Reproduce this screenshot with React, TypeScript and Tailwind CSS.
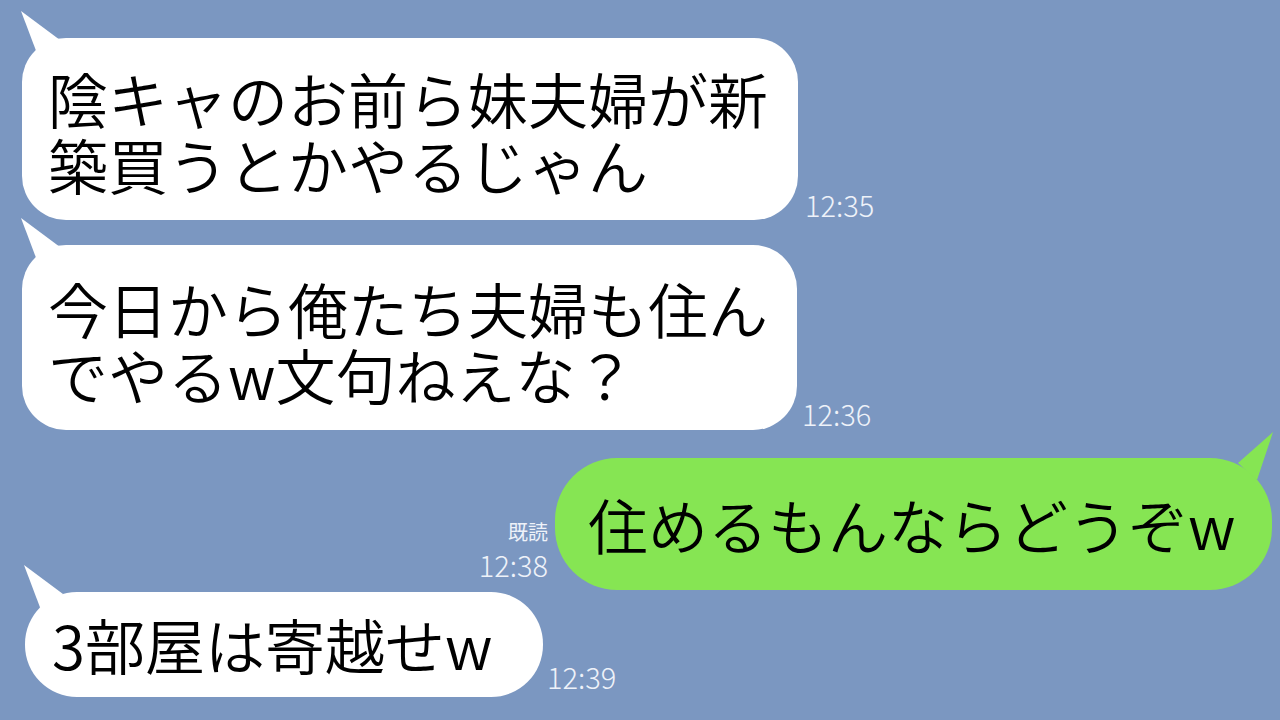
import React from "react"

type Msg = {
    lines: string[]
    time: string
}

const Tail = ({ fill }: { fill: string }) => (
    <svg className="absolute left-[-2px] top-[-28px]" width="50" height="50" viewBox="0 0 50 50">
        <polygon points="1,1 18,46 40,30" fill={fill} />
    </svg>
)

const Time = ({ children, className = "" }: { children: React.ReactNode, className?: string }) => (
    <div className={`text-[29px] leading-none font-light text-[#eef2f9] whitespace-nowrap ${className}`}>{children}</div>
)

function LeftBubble({ msg, className, bubbleClass, timeClass }: { msg: Msg, className: string, bubbleClass: string, timeClass: string }) {
    return (
        <div className={`flex items-end ${className}`}>
            <div className={`relative bg-white ${bubbleClass}`}>
                <Tail fill="#ffffff" />
                <p className="relative text-[60px] leading-[66px] font-[350] text-black whitespace-nowrap">
                    {msg.lines.map((l, k) => (
                        <React.Fragment key={k}>
                            {k > 0 && <br />}
                            {l}
                        </React.Fragment>
                    ))}
                </p>
            </div>
            <Time className={timeClass}>{msg.time}</Time>
        </div>
    )
}

export default function App() {
    return (
        <div className="w-[1280px] h-[720px] overflow-hidden bg-[#7b97c1] font-['Noto_Sans_CJK_JP',sans-serif]">
            <div className="flex flex-col pt-[38px]">
                <LeftBubble
                    msg={{ lines: ["陰キャのお前ら妹夫婦が新", "築買うとかやるじゃん"], time: "12:35" }}
                    className="ml-[22px]"
                    bubbleClass="w-[776px] h-[182px] rounded-[44px] pl-[26px] pt-[27px]"
                    timeClass="ml-[7px] mb-[1px]"
                />
                <LeftBubble
                    msg={{ lines: ["今日から俺たち夫婦も住ん", "でやるw文句ねえな？"], time: "12:36" }}
                    className="ml-[22px] mt-[25px]"
                    bubbleClass="w-[775px] h-[185px] rounded-[44px] pl-[26px] pt-[30px]"
                    timeClass="ml-[5px] mb-[2px]"
                />

                {/* sent message */}
                <div className="flex items-end justify-end mt-[28px] pr-[8px]">
                    <div className="flex flex-col items-end mr-[7px] mb-[11px] text-[#eef2f9]">
                        <div className="text-[20px] leading-none mb-[8px]">既読</div>
                        <Time>12:38</Time>
                    </div>
                    <div className="relative w-[717px] h-[132px] rounded-[62px] bg-[#86e553] pl-[33px] pt-[33px]">
                        <svg className="absolute right-[-4px] top-[-30px]" width="50" height="60" viewBox="0 0 50 60">
                            <polygon points="47,4 12,35 31,52" fill="#86e553" />
                        </svg>
                        <p className="relative text-[60px] leading-[66px] font-[350] text-black whitespace-nowrap">住めるもんならどうぞw</p>
                    </div>
                </div>

                <LeftBubble
                    msg={{ lines: ["3部屋は寄越せw"], time: "12:39" }}
                    className="ml-[25px] mt-[2px]"
                    bubbleClass="w-[518px] h-[105px] rounded-[52px] pl-[27px] pt-[19px]"
                    timeClass="ml-[4px] mb-[6px]"
                />
            </div>
        </div>
    )
}
